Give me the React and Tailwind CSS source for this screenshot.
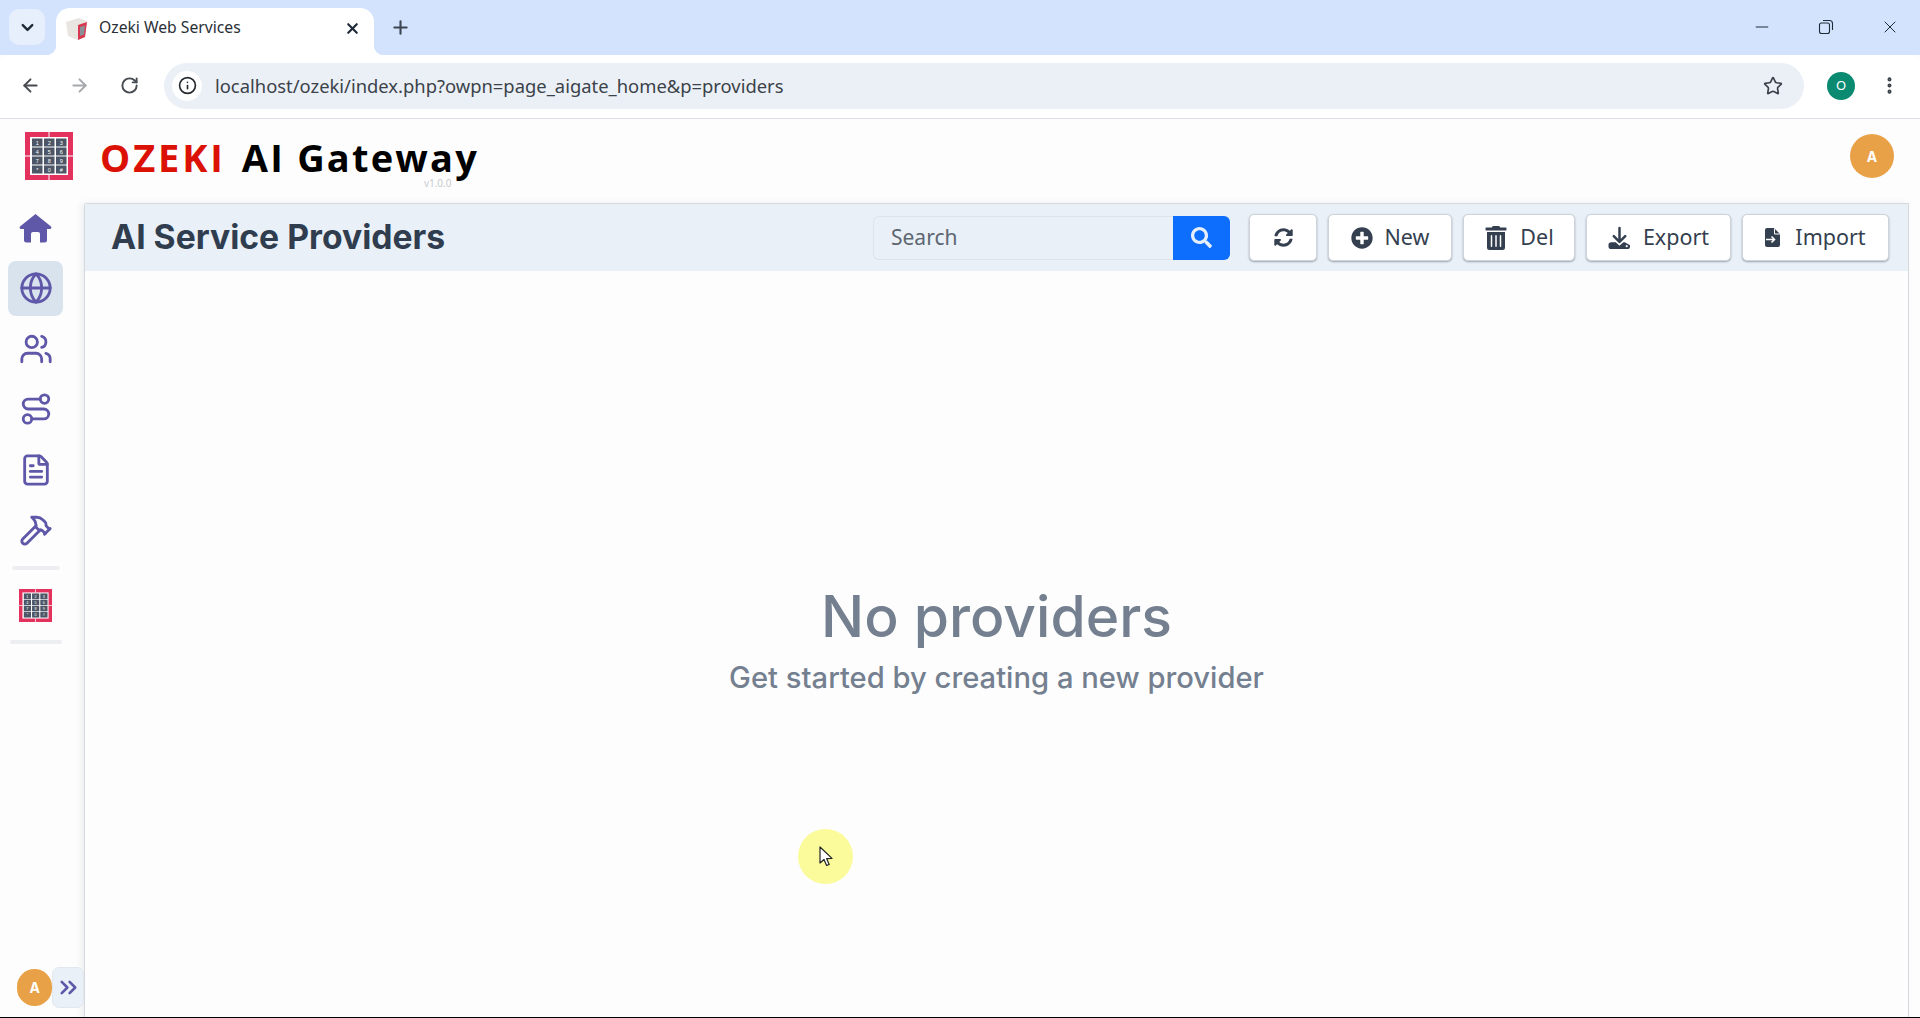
import React from 'react';
import { ArrowLeft, ArrowRight, RotateCw, Info, Star, EllipsisVertical, Minus, X, Plus, ChevronDown, Globe, Users, Route, FileText, Hammer, ChevronsRight } from 'lucide-react';
import { FaSearch, FaSyncAlt, FaPlusCircle, FaTrashAlt } from 'react-icons/fa';

const UI_FONT = "font-['Noto_Sans','Open_Sans',sans-serif]";
const HEAD_FONT = "font-['Inter','Open_Sans',sans-serif]";

function KeypadLogo({ size }) {
  const keys = ['1', '2', '3', '4', '5', '6', '7', '8', '9', '*', '0', '#'];
  return (
    <svg width={size} height={size} viewBox="0 0 48 48">
      <rect width="48" height="48" fill="#e3325e" />
      <rect x="5" y="5" width="38" height="38" fill="#fff" />
      <path d="M24 0v5M24 43v5M0 24h5M43 24h5" stroke="#fff" strokeWidth="1" />
      {keys.map((k, i) => {
        const x = 7 + (i % 3) * 12;
        const y = 6.5 + Math.floor(i / 3) * 9;
        return (
          <g key={k}>
            <rect x={x} y={y} width="10.5" height="8" fill="#4c5666" />
            <text x={x + 5.2} y={y + 6} fontSize="5.5" fill="#fff" textAnchor="middle" fontFamily="Liberation Sans">{k}</text>
          </g>
        );
      })}
    </svg>
  );
}

function Favicon() {
  return (
    <svg width="23" height="23" viewBox="0 0 23 23">
      <path d="M1 5l13-4 8 3-2 16-7 3-10-4z" fill="#e9e6e2" />
      <path d="M13 8l9-3-2 15-7 3z" fill="#d8384f" />
      <path d="M15 10l5-1.5-1 9-4 1.5z" fill="#8b8f96" />
    </svg>
  );
}

function HomeIcon() {
  return (
    <svg width="33" height="30" viewBox="0 0 33 30" fill="currentColor">
      <path d="M16.5 1L32 13.5Q33.2 15.5 31 16H28V27Q28 29.5 25.5 29.5H21V21Q21 19 19 19H14Q12 19 12 21V29.5H7.5Q5 29.5 5 27V16H2Q-.2 15.5 1 13.5Z" />
    </svg>
  );
}

function ExportIcon() {
  return (
    <svg width="23" height="24" viewBox="0 0 24 24" className="text-[#343f4f]">
      <path d="M12 1.5V15M6 10l6 6 6-6" fill="none" stroke="currentColor" strokeWidth="2.6" strokeLinecap="round" strokeLinejoin="round" />
      <path d="M3.5 16.5H8l4 3.5 4-3.5h1.5L23 19.5v1A3 3 0 0 1 20 23.5H3.5A3 3 0 0 1 .5 20.5v-1a3 3 0 0 1 3-3z" fill="currentColor" />
      <circle cx="19.5" cy="20.5" r="1.1" fill="#fff" />
    </svg>
  );
}

function ImportIcon() {
  return (
    <svg width="15" height="19" viewBox="0 0 15 19" className="text-[#343f4f] mr-[3px]">
      <path d="M2 0h7l6 6v11a2 2 0 0 1-2 2H2a2 2 0 0 1-2-2V2a2 2 0 0 1 2-2z" fill="currentColor" />
      <path d="M9.5 .5v5.5h5.5" fill="none" stroke="#fff" strokeWidth="1" />
      <path d="M1 11.5h8M6.5 8.5l3 3-3 3" fill="none" stroke="#fff" strokeWidth="1.6" />
    </svg>
  );
}

function ToolButton({ icon, label, width }) {
  return (
    <button className={`flex items-center justify-center gap-[12px] h-[47px] bg-white border border-[#cfd4da] rounded-[5px] shadow-[0_1px_2px_rgba(60,70,85,0.45)] text-[21.5px] text-[#343f4f] ${width}`}>
      {icon}
      {label && <span>{label}</span>}
    </button>
  );
}

function NavItem({ icon: Icon, active, custom }) {
  return (
    <div className={`w-[55px] h-[55px] ml-[8px] flex items-center justify-center rounded-[8px] text-[#5f57a8] ${active ? 'bg-[#d9e3ee]' : ''}`}>
      {custom ? <Icon /> : <Icon size={34} strokeWidth={2} />}
    </div>
  );
}

export default function App() {
  return (
    <div className={`relative h-[1018px] w-[1920px] flex flex-col overflow-hidden bg-[#fdfdfd] ${UI_FONT}`}>
      {/* browser tab strip */}
      <div className="h-[55px] shrink-0 bg-[#d3e3fd] flex items-end pl-[9px] pr-[20px]">
        <div className="self-start mt-[9px] w-[36px] h-[36px] rounded-[10px] bg-[#e7effc] flex items-center justify-center">
          <ChevronDown size={19} strokeWidth={3} className="text-[#1f2a37]" />
        </div>
        <div className="relative ml-[11px] w-[318px] h-[47px] bg-white rounded-t-[14px] flex items-center pl-[9px] pr-[13px] pb-[7px]">
          <span className="absolute -left-[10px] bottom-0 w-[10px] h-[10px] bg-[radial-gradient(circle_at_0_0,#d3e3fd_10px,#ffffff_10.5px)]" />
          <span className="absolute -right-[10px] bottom-0 w-[10px] h-[10px] bg-[radial-gradient(circle_at_100%_0,#d3e3fd_10px,#ffffff_10.5px)]" />
          <Favicon />
          <span className="ml-[11px] text-[15.7px] text-[#2b3037]">Ozeki Web Services</span>
          <X size={17} strokeWidth={3} className="ml-auto text-[#1f2a37]" />
        </div>
        <div className="self-start mt-[17px] ml-[16px] text-[#3c4550]">
          <Plus size={21} strokeWidth={2.4} />
        </div>
        <div className="self-start ml-auto mt-[17px] flex items-center gap-[46px] text-[#1f2a37]">
          <Minus size={20} strokeWidth={1.2} />
          <svg width="16" height="16" viewBox="0 0 16 16" fill="none" stroke="currentColor" strokeWidth="1.1">
            <rect x="1.5" y="4" width="10" height="10.5" rx="2" />
            <path d="M5 1.5h6.5a3 3 0 0 1 3 3V11" />
          </svg>
          <X size={20} strokeWidth={1.2} />
        </div>
      </div>

      {/* browser toolbar */}
      <div className="h-[64px] shrink-0 bg-white border-b border-[#dcdfe3] rounded-t-[10px] flex items-center pl-[20px] pr-[14px] pb-[2px]">
        <ArrowLeft size={21} strokeWidth={2.2} className="text-[#474c52]" />
        <ArrowRight size={21} strokeWidth={2.2} className="ml-[28px] text-[#a4a7ab]" />
        <RotateCw size={19} strokeWidth={2.4} className="ml-[30px] text-[#474c52]" />
        <div className="ml-[25px] w-[1640px] h-[46px] rounded-full bg-[#ebf0f7] flex items-center pl-[8px] pr-[21px]">
          <div className="w-[30px] h-[30px] rounded-full bg-white flex items-center justify-center">
            <Info size={19} strokeWidth={2.1} className="text-[#252a30]" />
          </div>
          <span className="ml-[13px] text-[18.4px] text-[#3b4249]">localhost/ozeki/index.php?owpn=page_aigate_home&amp;p=providers</span>
          <Star size={20} strokeWidth={2} className="ml-auto text-[#3b4249]" />
        </div>
        <div className="ml-[23px] w-[28px] h-[28px] rounded-full bg-[#0b8a72] flex items-center justify-center text-[13px] text-white">O</div>
        <EllipsisVertical size={21} strokeWidth={2.6} className="ml-[24px] text-[#3b4249]" />
      </div>

      {/* app header */}
      <div className="h-[81px] shrink-0 flex pl-[25px] pr-[26px]">
        <div className="mt-[13px]"><KeypadLogo size={48} /></div>
        <div className="relative ml-[27px] mt-[10px] h-[56px] flex items-center text-[38px] font-bold font-['Open_Sans',sans-serif] whitespace-nowrap">
          <span className="text-[#dc1105] tracking-[2.9px]">OZEKI</span>
          <span className="ml-[16px] text-black tracking-[2.2px]">AI Gateway</span>
          <span className="absolute left-[324px] top-[47px] text-[10px] font-normal tracking-normal text-[#c4c7cb]">v1.0.0</span>
        </div>
        <div className={`ml-auto mt-[15px] w-[44px] h-[44px] rounded-full bg-[#e8a147] flex items-center justify-center text-[14px] font-bold text-white ${HEAD_FONT}`}>A</div>
      </div>

      <div className="flex-1 min-h-0 flex">
        {/* sidebar */}
        <div className="w-[84px] shrink-0 flex flex-col pb-[10px]">
          <div className="flex flex-col gap-[5.5px]">
            <NavItem icon={HomeIcon} custom />
            <NavItem icon={Globe} active />
            <NavItem icon={Users} />
            <NavItem icon={Route} />
            <NavItem icon={FileText} />
            <NavItem icon={Hammer} />
          </div>
          <div className="ml-[12px] mt-[8px] w-[48px] h-[4px] rounded-full bg-[#eceef1]" />
          <div className="ml-[19px] mt-[19px]"><KeypadLogo size={33} /></div>
          <div className="ml-[10px] mt-[18px] w-[52px] h-[4px] rounded-full bg-[#eceef1]" />
          <div className="relative z-10 mt-auto flex items-center pl-[17px]">
            <div className={`w-[37px] h-[37px] rounded-full bg-[#e8a147] flex items-center justify-center text-[14px] font-bold text-white ${HEAD_FONT}`}>A</div>
            <div className="w-[33px] h-[41px] rounded-[7px] bg-[#e9f0f8] border border-[#e2e7ee] flex items-center justify-center text-[#5f57a8]">
              <ChevronsRight size={27} strokeWidth={2.3} />
            </div>
          </div>
        </div>

        {/* main panel */}
        <div className="w-[1825px] mt-[3px] flex flex-col bg-[#fdfdfd] border-l border-t border-r border-[#d5d9de] rounded-tl-[3px] shadow-[-3px_0_6px_rgba(120,130,145,0.12)]">
          <div className="h-[67px] shrink-0 bg-[#e9f0f8] flex items-center pl-[26px] pr-[19px]">
            <h1 className={`text-[33.7px] font-bold text-[#2f3d4f] whitespace-nowrap ${HEAD_FONT}`}>AI Service Providers</h1>
            <div className="ml-auto flex items-center h-[44px] w-[357px]">
              <div className="flex-1 h-full border border-[#dde3ea] border-r-0 rounded-l-[6px] flex items-center pl-[17px] text-[21px] text-[#5d6670]">Search</div>
              <div className="w-[57px] h-full bg-[#0d6efd] rounded-r-[6px] flex items-center justify-center">
                <FaSearch size={21} className="text-[#e4eefc]" />
              </div>
            </div>
            <div className="ml-[19px] flex items-center gap-[11px]">
              <ToolButton icon={<FaSyncAlt size={19} className="text-[#343f4f]" />} width="w-[68px]" />
              <ToolButton icon={<FaPlusCircle size={22} className="text-[#343f4f]" />} label="New" width="w-[124px]" />
              <ToolButton icon={<FaTrashAlt size={24} className="text-[#343f4f]" />} label="Del" width="w-[112px]" />
              <ToolButton icon={<ExportIcon />} label="Export" width="w-[145px]" />
              <ToolButton icon={<ImportIcon />} label="Import" width="w-[147px]" />
            </div>
          </div>
          <div className={`flex-1 flex flex-col items-center pt-[316px] ${HEAD_FONT}`}>
            <div className="text-[57px] leading-[60px] font-medium text-[#748090]">No providers</div>
            <div className="mt-[13px] text-[29.2px] leading-[36px] font-medium text-[#748090]">Get started by creating a new provider</div>
          </div>
        </div>
      </div>

      {/* recorder cursor highlight */}
      <div className="absolute left-[798px] top-[829px] w-[55px] h-[55px] rounded-full bg-[#fbfb9c] flex items-center justify-center">
        <svg width="14" height="22" viewBox="0 0 14 22" className="ml-[1px]">
          <path d="M1 1v16l4-3.5 2.6 6 2.6-1.1-2.6-5.8 5.4-.2z" fill="#fff" stroke="#222" strokeWidth="1.2" strokeLinejoin="round" />
        </svg>
      </div>
      <div className="absolute left-0 bottom-0 w-full h-px bg-black" />
    </div>
  );
}
